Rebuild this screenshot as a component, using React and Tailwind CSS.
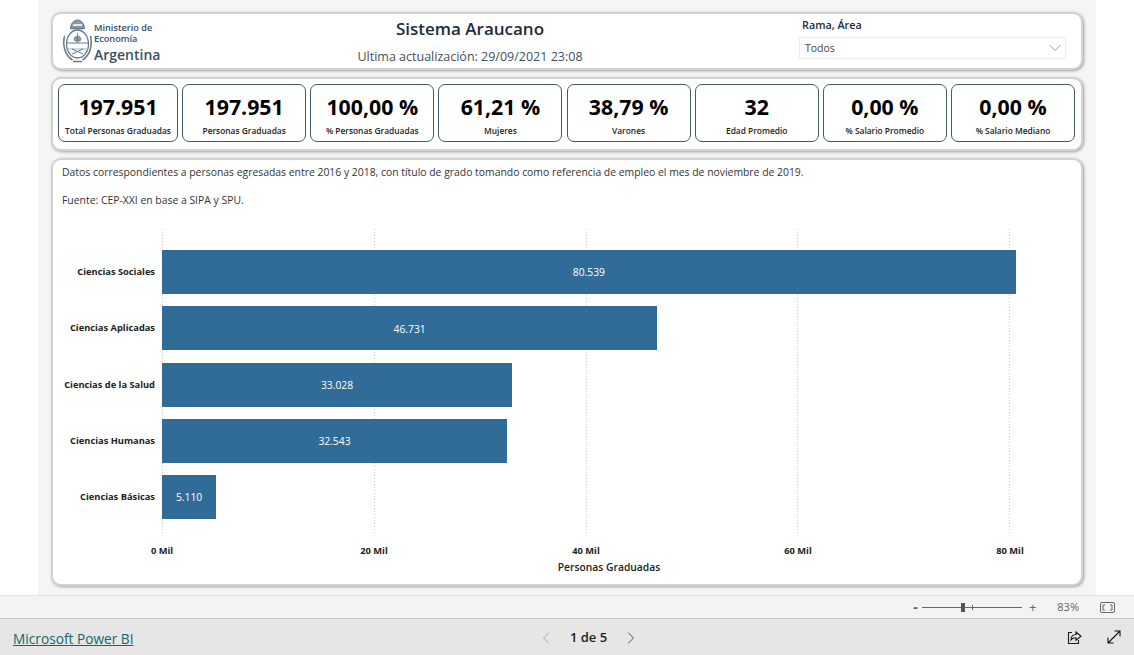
import { ChevronDown, ChevronLeft, ChevronRight } from "lucide-react";

const kpis = [
  { value: "197.951", label: "Total Personas Graduadas", width: "w-[120px]" },
  { value: "197.951", label: "Personas Graduadas", width: "w-[124px]" },
  { value: "100,00 %", label: "% Personas Graduadas", width: "w-[124px]" },
  { value: "61,21 %", label: "Mujeres", width: "w-[124px]" },
  { value: "38,79 %", label: "Varones", width: "w-[124px]" },
  { value: "32", label: "Edad Promedio", width: "w-[124px]" },
  { value: "0,00 %", label: "% Salario Promedio", width: "w-[124px]" },
  { value: "0,00 %", label: "% Salario Mediano", width: "w-[124px]" },
];

const bars = [
  { name: "Ciencias Sociales", value: 80539, text: "80.539" },
  { name: "Ciencias Aplicadas", value: 46731, text: "46.731" },
  { name: "Ciencias de la Salud", value: 33028, text: "33.028" },
  { name: "Ciencias Humanas", value: 32543, text: "32.543" },
  { name: "Ciencias Básicas", value: 5110, text: "5.110" },
];

const ticks = ["0 Mil", "20 Mil", "40 Mil", "60 Mil", "80 Mil"];

const panel = "rounded-[10px] bg-white border-2 border-[#d2d2d2] shadow-[1px_1px_3px_rgba(0,0,0,0.35)]";

const Emblem = () => (
  <svg width="29" height="46" viewBox="0 0 29 46" fill="none" stroke="#66798a" strokeWidth="1">
    <path d="M7.500 11c0-5 3-9 7-9s7 4 7 9" fill="#8c9aa6" stroke="#66798a" />
    <path d="M10 7h9" stroke="#fff" strokeWidth="1.500" />
    <path d="M8 10.500h13" strokeWidth="1.500" />
    <ellipse cx="14.500" cy="26" rx="11" ry="14" strokeWidth="1.300" />
    <path d="M3.500 25h22" strokeWidth="1" />
    <path d="M14.500 15v10M11 21c1-4 6-4 7 0l-1 2h-5z" fill="#8c9aa6" strokeWidth="0.800" />
    <path d="M3.500 31h22" stroke="#a3b0ba" />
    <path d="M9 36l11-5M20 36L9 31" strokeWidth="1" />
    <path d="M1.500 18c-2 9 0 19 8 24M27.500 18c2 9 0 19-8 24" strokeWidth="1.500" />
    <path d="M10 43.500h9" strokeWidth="1.500" />
  </svg>
);

const ShareIcon = () => (
  <svg width="15" height="15" viewBox="0 0 15 15" fill="none" stroke="#1a1a1a" strokeWidth="1.100">
    <path d="M5 2.500H1.500v11h10V10" />
    <path d="M4 10c0-3.500 2-5.500 5-5.500V2l5 4.300-5 4V7.800C7 7.800 5 8.500 4 10z" />
  </svg>
);

const ExpandIcon = () => (
  <svg width="14" height="14" viewBox="0 0 14 14" fill="none" stroke="#111" strokeWidth="1.100">
    <path d="M1 13L13 1M7.500 1H13v5.500M1 7.500V13h5.500" />
  </svg>
);

const FitIcon = () => (
  <svg width="15" height="11" viewBox="0 0 15 11" fill="none" stroke="#666" strokeWidth="1">
    <rect x="0.500" y="0.500" width="14" height="10" rx="1.500" />
    <path d="M5 3H3v5h2M10 3h2v5h-2" />
  </svg>
);

const Header = () => (
  <header className={`${panel} h-[58px] flex`}>
    <div className="w-[115px] shrink-0 pl-[10px] pt-[4px] flex gap-[2px]">
      <Emblem />
      <div className="pt-[4px] text-[#3a5064] leading-none whitespace-nowrap">
        <p className="text-[9.200px] font-semibold leading-[11px]">Ministerio de</p>
        <p className="text-[9.200px] font-semibold leading-[11px]">Economía</p>
        <p className="text-[14px] font-semibold leading-[19px] mt-[1px]">Argentina</p>
      </div>
    </div>
    <div className="w-[604px] shrink-0 flex flex-col items-center pt-[3px]">
      <h1 className="text-[17px] font-semibold leading-[24px] text-[#1c2b3a]">Sistema Araucano</h1>
      <p className="text-[12.500px] leading-[16px] mt-[8px] text-[#44505c]">Ultima actualización: 29/09/2021 23:08</p>
    </div>
    <div className="ml-[27px] pt-[3px]">
      <p className="text-[10.800px] font-semibold leading-[16px] pl-[3px] text-[#1c2b3a]">Rama, Área</p>
      <div className="mt-[4px] w-[267px] h-[22px] border border-[#ededed] flex items-center justify-between pl-[5px]">
        <span className="text-[10.500px] text-[#444] pt-[2px]">Todos</span>
        <ChevronDown size={20} strokeWidth={0.7} className="text-[#555]" />
      </div>
    </div>
  </header>
);

const KpiRow = () => (
  <section className={`${panel} h-[74px] mt-[7px] flex items-center pl-[5px] pb-[2px] gap-[4.150px]`}>
    {kpis.map((kpi) => (
      <div key={kpi.label} className={`${kpi.width} h-[58px] shrink-0 rounded-[7px] border border-[#44586a] flex flex-col items-center`}>
        <p className="text-[21.300px] font-bold leading-[28px] mt-[8px] text-black">{kpi.value}</p>
        <p className="text-[8.400px] font-semibold leading-[12px] mt-[4px] text-[#222] whitespace-nowrap">{kpi.label}</p>
      </div>
    ))}
  </section>
);

const Chart = () => (
  <div className="mt-[22px]">
    <div className="relative ml-[109px] w-[848px] h-[306px] pt-[21px] flex flex-col gap-[12.250px]">
      <div className="absolute inset-0 flex justify-between">
        {ticks.map((t) => (
          <div key={t} className="w-px bg-[repeating-linear-gradient(to_bottom,#cfcfcf_0,#cfcfcf_1px,transparent_1px,transparent_3px)]" />
        ))}
      </div>
      {bars.map((bar) => (
        <div key={bar.name} className="relative h-[44px] flex items-center">
          <span className="absolute right-full mr-[7px] text-[9.300px] font-bold text-[#222] whitespace-nowrap">{bar.name}</span>
          <div
            className="h-full shrink-0 bg-[#316b97] flex items-center justify-center text-[10.300px] text-white pt-[2px]"
            style={{ width: `${(bar.value / 80000) * 100}%` }}
          >
            {bar.text}
          </div>
        </div>
      ))}
    </div>
    <div className="ml-[109px] w-[848px] mt-[8px] flex justify-between">
      {ticks.map((t) => (
        <span key={t} className="w-0 flex justify-center whitespace-nowrap text-[9.300px] font-bold leading-[16px] text-[#222]">{t}</span>
      ))}
    </div>
    <p className="ml-[109px] w-[894px] text-center text-[10.300px] font-semibold leading-[16px] text-[#222]">Personas Graduadas</p>
  </div>
);

export default function App() {
  return (
    <div className="h-[655px] w-[1134px] flex flex-col bg-white overflow-hidden font-['Open_Sans','Liberation_Sans',sans-serif]">
      <div className="h-[595px] px-[38px]">
        <div className="w-[1058px] h-full bg-[#f5f5f5] pt-[12px] px-[13px]">
          <Header />
          <KpiRow />
          <main className={`${panel} h-[428px] mt-[7px] pl-[9px] pt-[5px]`}>
            <p className="text-[10.400px] leading-[14px] text-[#333]">
              Datos correspondientes a personas egresadas entre 2016 y 2018, con título de grado tomando como referencia de empleo el mes de noviembre de 2019.
            </p>
            <p className="text-[10.400px] leading-[14px] mt-[14px] text-[#333]">Fuente: CEP-XXI en base a SIPA y SPU.</p>
            <div className="-ml-[9px]">
              <Chart />
            </div>
          </main>
        </div>
      </div>
      <div className="h-[23px] bg-[#f3f3f3] border-t border-[#e3e3e3] flex items-center justify-end text-[#666]">
        <span className="text-[14px] font-bold leading-none mr-[4px]">-</span>
        <div className="relative w-[100px] h-px bg-[#666] mr-[7px]">
          <span className="absolute left-[39px] -top-[4px] w-[4px] h-[9px] bg-[#555]" />
          <span className="absolute left-[50px] -top-[2px] w-px h-[5px] bg-[#666]" />
        </div>
        <span className="text-[13px] leading-none mr-[21px]">+</span>
        <span className="text-[11px] mr-[21px]">83%</span>
        <span className="mr-[19px] flex"><FitIcon /></span>
      </div>
      <footer className="h-[37px] bg-[#e6e6e6] border-t border-[#c8c8c8] grid grid-cols-[523px_105px_1fr] items-center pl-[13px]">
        <a href="#" className="text-[13.700px] text-[#11696b] underline pt-[5px]">Microsoft Power BI</a>
        <div className="flex items-center justify-between text-[#222] pt-[1px]">
          <ChevronLeft size={20} strokeWidth={0.8} className="text-[#888]" />
          <span className="text-[13px] font-semibold">1 de 5</span>
          <ChevronRight size={20} strokeWidth={0.9} className="text-[#222]" />
        </div>
        <div className="flex items-center justify-end gap-[25px] pr-[13px]">
          <ShareIcon />
          <ExpandIcon />
        </div>
      </footer>
    </div>
  );
}
